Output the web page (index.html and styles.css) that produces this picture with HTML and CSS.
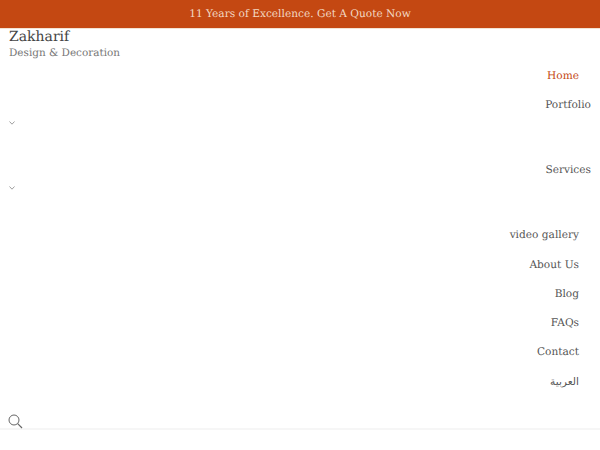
FILE: index.html
```html
<!DOCTYPE html>
<html lang="en">
<head>
<meta charset="utf-8">
<title>Zakharif</title>
<link rel="stylesheet" href="styles.css">
</head>
<body>
<div class="topbar">11 Years of Excellence. Get A Quote Now</div>
<header class="header">
  <div class="brand">
    <div class="brand-name">Zakharif</div>
    <div class="brand-sub">Design &amp; Decoration</div>
  </div>
  <ul class="nav">
    <li class="item item-active"><a>Home</a></li>
    <li class="item item-sub"><a>Portfolio</a>
      <svg class="chev" width="6" height="4" viewBox="0 0 6 4"><path d="M.5.5 3 3.2 5.5.5" fill="none" stroke="#777" stroke-width=".7"/></svg>
    </li>
    <li class="item item-sub"><a>Services</a>
      <svg class="chev" width="6" height="4" viewBox="0 0 6 4"><path d="M.5.5 3 3.2 5.5.5" fill="none" stroke="#777" stroke-width=".7"/></svg>
    </li>
    <li class="item"><a>video gallery</a></li>
    <li class="item"><a>About Us</a></li>
    <li class="item"><a>Blog</a></li>
    <li class="item"><a>FAQs</a></li>
    <li class="item"><a>Contact</a></li>
    <li class="item"><a>العربية</a></li>
  </ul>
  <div class="search">
    <svg class="search-icon" width="15" height="15" viewBox="0 0 15 15"><circle cx="6" cy="6" r="5" fill="none" stroke="#666" stroke-width="1"/><path d="M9.7 9.7 14 14" fill="none" stroke="#666" stroke-width="1.2"/></svg>
  </div>
</header>
```
FILE: styles.css
```css
* { box-sizing: border-box; }
html, body { margin: 0; padding: 0; background: #fff; }
body { font-family: "DejaVu Serif", serif; text-rendering: geometricPrecision; color: #555; }
.topbar {
  height: 29px;
  background: #c44812;
  color: #f3d9c4;
  font-size: 10.6px;
  line-height: 28px;
  text-align: center;
  border-bottom: 1px solid #f3e3d3;
}
.header {
  border-bottom: 2px solid #f6f6f6;
  height: 401px;
  padding: 0 0 0 8px;
}
.brand { height: 33px; padding-left: 1px; }
.brand-name { font-size: 14px; line-height: 17px; color: #444; }
.brand-sub { font-size: 10.45px; line-height: 15px; color: #777; }
.nav { list-style: none; margin: 0; padding: 0; text-align: right; font-size: 10.6px; }
.item { height: 29.3px; line-height: 29.3px; padding-right: 21px; }
.item-active { color: #c44812; }
.item-sub { height: 65px; padding-right: 9px; position: relative; }
.chev { display: block; margin: 0; position: absolute; left: 1px; top: 30px; }
.search { margin-top: 17px; height: 20px; }
.search-icon { display: block; }
```
